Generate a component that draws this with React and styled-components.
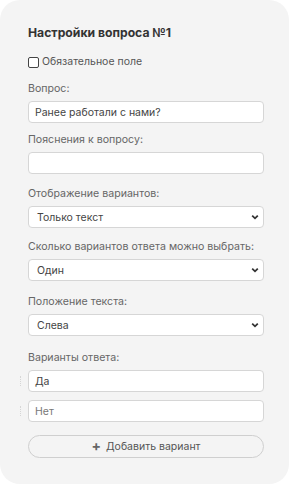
import React from 'react';
import styled, { createGlobalStyle } from 'styled-components';

const Global = createGlobalStyle`
  html, body {
    margin: 0;
    padding: 0;
    background: #ffffff;
  }
  body {
    font-family: Inter, "Noto Sans", sans-serif;
  }
`;

const Panel = styled.div`
  width: 289px;
  height: 484px;
  box-sizing: border-box;
  background: #f4f4f4;
  border-radius: 20px;
  padding: 25px 25px 0 28px;
  display: flex;
  flex-direction: column;
`;

const Title = styled.div`
  font-size: 12.2px;
  font-weight: 700;
  color: #333;
  line-height: 16px;
  margin-bottom: 14px;
`;

const CheckRow = styled.label`
  display: flex;
  align-items: center;
  gap: 3px;
  font-size: 10.5px;
  color: #555;
  line-height: 14px;
  margin-bottom: 13px;
`;

const Box = styled.span`
  width: 9px;
  height: 9px;
  border: 1px solid #444;
  border-radius: 2px;
  background: #fff;
`;

const Field = styled.div`
  display: flex;
  flex-direction: column;
  margin-bottom: ${p => p.$gap || 11}px;
`;

const Label = styled.div`
  font-size: 10.6px;
  color: #666;
  line-height: 14px;
  margin-bottom: 5px;
`;

const Input = styled.div`
  height: 22px;
  box-sizing: border-box;
  background: #fff;
  border: 1px solid #d6d6d6;
  border-radius: 4px;
  padding: 0 6px 0 6px;
  display: flex;
  align-items: center;
  justify-content: space-between;
  font-size: 10.5px;
  color: ${p => (p.$muted ? '#777' : '#444')};
`;

const SelectBox = styled(Input)`
  padding: 0 4px 0 8px;
`;

const AnswerRow = styled.div`
  position: relative;
  margin-bottom: 8px;
`;

const Handle = styled.span`
  position: absolute;
  left: -8px;
  top: 6px;
  height: 10px;
  border-left: 1px dotted #d6d6d6;
`;

const AddButton = styled.button`
  margin-top: 5px;
  height: 23px;
  border: 1px solid #cfcfcf;
  border-radius: 12px;
  background: transparent;
  font-family: inherit;
  font-size: 10.5px;
  color: #555;
  display: flex;
  align-items: center;
  justify-content: center;
  gap: 5px;
  padding: 0;
`;

const Plus = styled.span`
  font-size: 14px;
  font-weight: 700;
  color: #666;
  line-height: 1;
  margin-top: -1px;
`;

const Chevron = () => (
  <svg width="8" height="6" viewBox="0 0 8 6">
    <path d="M1.2 1.6 L4 4.3 L6.8 1.6" fill="none" stroke="#333" strokeWidth="1.8" />
  </svg>
);

const Select = ({ value }) => (
  <SelectBox>
    {value}
    <Chevron />
  </SelectBox>
);

export default function App() {
  return (
    <>
      <Global />
      <Panel>
        <Title>Настройки вопроса №1</Title>
        <CheckRow>
          <Box />
          Обязательное поле
        </CheckRow>
        <Field $gap={10}>
          <Label>Вопрос:</Label>
          <Input>Ранее работали с нами?</Input>
        </Field>
        <Field $gap={13}>
          <Label>Пояснения к вопросу:</Label>
          <Input />
        </Field>
        <Field $gap={12}>
          <Label>Отображение вариантов:</Label>
          <Select value="Только текст" />
        </Field>
        <Field $gap={14}>
          <Label>Сколько вариантов ответа можно выбрать:</Label>
          <Select value="Один" />
        </Field>
        <Field $gap={15}>
          <Label>Положение текста:</Label>
          <Select value="Слева" />
        </Field>
        <Label>Варианты ответа:</Label>
        <AnswerRow>
          <Handle />
          <Input>Да</Input>
        </AnswerRow>
        <AnswerRow>
          <Handle />
          <Input $muted>Нет</Input>
        </AnswerRow>
        <AddButton>
          <Plus>+</Plus>
          Добавить вариант
        </AddButton>
      </Panel>
    </>
  );
}
